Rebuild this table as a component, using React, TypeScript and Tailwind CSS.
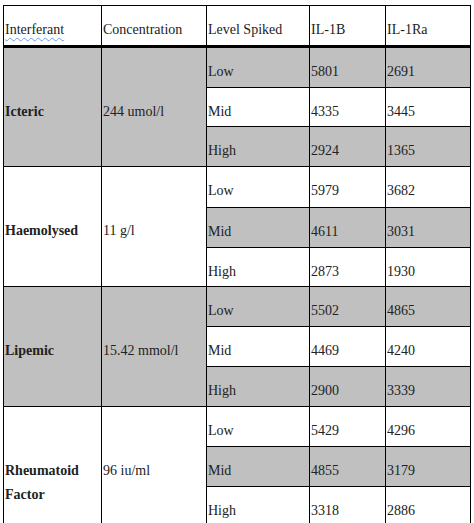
import React from "react";

type Sub = { level: string; a: string; b: string; gray: boolean };
type Group = {
  name: string[];
  conc: string;
  gray: boolean;
  subs: Sub[];
};

const groups: Group[] = [
  {
    name: ["Icteric"],
    conc: "244 umol/l",
    gray: true,
    subs: [
      { level: "Low", a: "5801", b: "2691", gray: true },
      { level: "Mid", a: "4335", b: "3445", gray: false },
      { level: "High", a: "2924", b: "1365", gray: true },
    ],
  },
  {
    name: ["Haemolysed"],
    conc: "11 g/l",
    gray: false,
    subs: [
      { level: "Low", a: "5979", b: "3682", gray: false },
      { level: "Mid", a: "4611", b: "3031", gray: true },
      { level: "High", a: "2873", b: "1930", gray: false },
    ],
  },
  {
    name: ["Lipemic"],
    conc: "15.42 mmol/l",
    gray: true,
    subs: [
      { level: "Low", a: "5502", b: "4865", gray: true },
      { level: "Mid", a: "4469", b: "4240", gray: false },
      { level: "High", a: "2900", b: "3339", gray: true },
    ],
  },
  {
    name: ["Rheumatoid", "Factor"],
    conc: "96 iu/ml",
    gray: false,
    subs: [
      { level: "Low", a: "5429", b: "4296", gray: false },
      { level: "Mid", a: "4855", b: "3179", gray: true },
      { level: "High", a: "3318", b: "2886", gray: false },
    ],
  },
];

const cell = "border-r border-b border-black pl-[1px] overflow-hidden whitespace-nowrap";
const head = "border-r border-b-[3px] border-black pl-[1px] pt-[16px] leading-[16px] whitespace-nowrap";

export default function App() {
  return (
    <div className="w-[474px] min-h-[523px] bg-white pt-[5px] pl-[3px] [font-family:'Liberation_Serif',serif] text-[14px] text-[#222]">
      <div className="grid w-[468px] border-t border-l border-black grid-cols-[98px_105px_103px_76px_85px] grid-rows-[42px_40px_39px_40px_41px_40px_39px_40px_40px_40px_40px_40px_40px]">
        <div className={head}>
          <span className="underline decoration-wavy decoration-[#6b9be3] decoration-1 underline-offset-[3px]">
            Interferant
          </span>
        </div>
        <div className={head}>Concentration</div>
        <div className={head}>Level Spiked</div>
        <div className={head}>IL-1B</div>
        <div className={head}>IL-1Ra</div>

        {groups.map((g) => (
          <React.Fragment key={g.conc}>
            <div
              className={`row-span-3 border-r border-b border-black pl-[1px] pt-[52px] leading-[24px] font-bold ${
                g.gray ? "bg-[#c0c0c0]" : "bg-white"
              }`}
            >
              {g.name.map((n) => (
                <div key={n}>{n}</div>
              ))}
            </div>
            <div
              className={`row-span-3 border-r border-b border-black pl-[1px] pt-[52px] leading-[24px] ${
                g.gray ? "bg-[#c0c0c0]" : "bg-white"
              }`}
            >
              {g.conc}
            </div>
            {g.subs.map((s) => {
              const bg = s.gray ? "bg-[#c0c0c0]" : "bg-white";
              return (
                <React.Fragment key={s.level}>
                  <div className={`${cell} ${bg} pt-[16px] leading-[16px]`}>{s.level}</div>
                  <div className={`${cell} ${bg} pt-[16px] leading-[16px]`}>{s.a}</div>
                  <div className={`${cell} ${bg} pt-[16px] leading-[16px]`}>{s.b}</div>
                </React.Fragment>
              );
            })}
          </React.Fragment>
        ))}
      </div>
    </div>
  );
}
